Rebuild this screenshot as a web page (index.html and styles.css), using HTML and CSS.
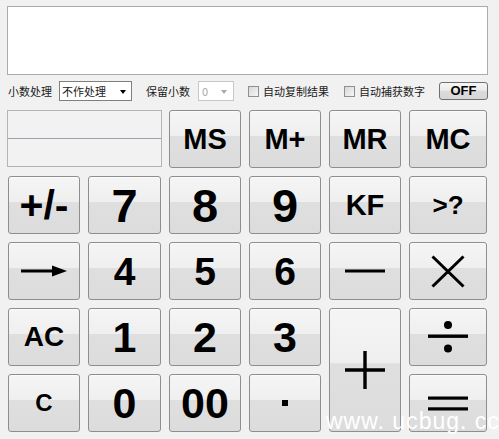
FILE: index.html
```html
<!DOCTYPE html>
<html>
<head>
<meta charset="utf-8">
<link rel="stylesheet" href="styles.css">
</head>
<body>
<div class="app">
  <div class="display"></div>
  <div class="options">
    <span class="lbl lbl-first">小数处理</span>
    <div class="select"><span class="sel-text">不作处理</span><span class="sel-arrow"></span></div>
    <span class="lbl lbl-second">保留小数</span>
    <div class="select select-disabled"><span class="sel-text">0</span><span class="sel-arrow"></span></div>
    <span class="check check-first"></span><span class="lbl check-lbl">自动复制结果</span>
    <span class="check check-second"></span><span class="lbl check-lbl">自动捕获数字</span>
    <button class="off">OFF</button>
  </div>
  <div class="keypad">
    <div class="memo"><div class="memo-line"></div></div>
    <button class="key t-mem">MS</button>
    <button class="key t-mem">M+</button>
    <button class="key t-mem">MR</button>
    <button class="key t-mem">MC</button>

    <button class="key t-sign">+/-</button>
    <button class="key t-big">7</button>
    <button class="key t-big">8</button>
    <button class="key t-big">9</button>
    <button class="key t-mem">KF</button>
    <button class="key t-q">&gt;?</button>

    <button class="key"><svg width="46" height="12" viewBox="0 0 46 12"><rect x="0" y="4.5" width="34" height="3" fill="#000"/><path d="M31 0.5 L46 6 L31 11.5 Z" fill="#000"/></svg></button>
    <button class="key t-mid">4</button>
    <button class="key t-mid">5</button>
    <button class="key t-mid">6</button>
    <button class="key"><svg width="40" height="4" viewBox="0 0 40 4"><rect x="0" y="0.5" width="40" height="3" fill="#000"/></svg></button>
    <button class="key"><svg width="34" height="33" viewBox="0 0 34 33"><path d="M1.5 1.5 L32.5 31.5 M32.5 1.5 L1.5 31.5" stroke="#000" stroke-width="3" fill="none"/></svg></button>

    <button class="key t-ac">AC</button>
    <button class="key t-low">1</button>
    <button class="key t-low">2</button>
    <button class="key t-low">3</button>
    <button class="key key-tall"><svg width="40" height="38" viewBox="0 0 40 38"><path d="M0 19 L40 19 M20 0 L20 38" stroke="#000" stroke-width="3.4" fill="none"/></svg></button>
    <button class="key"><svg width="40" height="32" viewBox="0 0 40 32"><rect x="0" y="13.5" width="40" height="3.4" fill="#000"/><circle cx="20" cy="4" r="4" fill="#000"/><circle cx="20" cy="27.5" r="4" fill="#000"/></svg></button>

    <button class="key t-c">C</button>
    <button class="key t-low">0</button>
    <button class="key t-low">00</button>
    <button class="key"><span class="dot"></span></button>
    <button class="key"><svg width="40" height="15" viewBox="0 0 40 15"><rect x="0" y="0.5" width="40" height="3.2" fill="#000"/><rect x="0" y="11.3" width="40" height="3.2" fill="#000"/></svg></button>
  </div>
  <div class="watermark">www. ucbug. cc</div>
</div>
</body>
</html>
```

FILE: styles.css
```css
html, body {
  margin: 0;
  padding: 0;
  background: #f1f1f1;
  overflow: hidden;
}
body {
  width: 499px;
  height: 439px;
  font-family: "Liberation Sans", Arial, sans-serif;
}
.app {
  position: relative;
  padding: 6px 11px 0 7px;
  height: 433px;
}
.display {
  height: 67px;
  background: #ffffff;
  border: 1px solid #a9abb0;
}
.options {
  display: flex;
  align-items: center;
  height: 20px;
  margin-top: 6px;
  font-family: "Noto Sans CJK SC", "Liberation Sans", sans-serif;
  font-size: 11px;
  color: #1a1a1a;
}
.lbl {
  white-space: nowrap;
  line-height: 20px;
}
.lbl-first { margin-left: 1px; }
.lbl-second { margin-left: 14px; }
.select {
  position: relative;
  box-sizing: border-box;
  width: 73px;
  height: 20px;
  margin-left: 7px;
  background: #fff;
  border: 1px solid #7f7f7f;
  display: flex;
  align-items: center;
}
.sel-text {
  padding-left: 2px;
  line-height: 18px;
}
.sel-arrow {
  position: absolute;
  right: 5px;
  top: 8px;
  width: 0;
  height: 0;
  border-left: 3.5px solid transparent;
  border-right: 3.5px solid transparent;
  border-top: 4px solid #000;
}
.select-disabled {
  width: 36px;
  margin-left: 8px;
  border-color: #c7c7c7;
  color: #a8a8a8;
}
.select-disabled .sel-text { padding-left: 3px; }
.select-disabled .sel-arrow { border-top-color: #a8a8a8; right: 6px; }
.check {
  box-sizing: border-box;
  width: 11px;
  height: 11px;
  border: 1px solid #8f8f8f;
  background: linear-gradient(135deg, #d8d8d8, #f6f6f6);
  flex: none;
}
.check-first { margin-left: 14px; }
.check-second { margin-left: 15px; }
.check-lbl { margin-left: 4px; }
.off {
  margin-left: auto;
  box-sizing: border-box;
  width: 49px;
  height: 18px;
  padding: 0;
  border: 1px solid #707070;
  border-radius: 3px;
  background: linear-gradient(#f6f6f6 0%, #ececec 45%, #dcdcdc 50%, #d6d6d6 100%);
  font-family: "Liberation Sans", Arial, sans-serif;
  font-weight: bold;
  font-size: 13px;
  color: #000;
  line-height: 16px;
}
.keypad {
  display: grid;
  grid-template-columns: 72px 73px 72px 72px 72px 78px;
  grid-auto-rows: 58px;
  gap: 8px;
  margin-top: 9px;
  padding-left: 1px;
}
.memo {
  grid-column: span 2;
  margin-left: -1px;
  margin-right: -1px;
  height: 57px;
  box-sizing: border-box;
  border: 1px solid #b2b4b8;
  background: #f2f2f2;
  position: relative;
}
.memo-line {
  margin-top: 27px;
  height: 1px;
  background: #9aa4b0;
}
.key {
  box-sizing: border-box;
  margin: 0;
  padding: 0;
  border: 1px solid #8e8e8e;
  border-radius: 3px;
  background: linear-gradient(#f5f5f5 0%, #efefef 44%, #dfdfe0 45%, #dcdcdd 100%);
  box-shadow: inset 0 1px 0 #fbfbfb;
  display: flex;
  align-items: center;
  justify-content: center;
  font-family: "Liberation Sans", Arial, sans-serif;
  font-weight: bold;
  color: #000;
  line-height: 1;
}
.key-tall {
  grid-row: span 2;
}
.t-mem { font-size: 29px; }
.t-q { font-size: 26px; }
.t-sign { font-size: 41px; }
.t-big { font-size: 47px; }
.t-mid { font-size: 39px; }
.t-low { font-size: 43px; }
.t-ac { font-size: 28px; }
.t-c { font-size: 24px; }
.dot {
  width: 6px;
  height: 6px;
  background: #000;
}
.watermark {
  position: absolute;
  left: 326px;
  top: 408px;
  font-family: "Liberation Sans", Arial, sans-serif;
  font-size: 23px;
  letter-spacing: 1px;
  color: #ffffff;
  white-space: nowrap;
}
```
